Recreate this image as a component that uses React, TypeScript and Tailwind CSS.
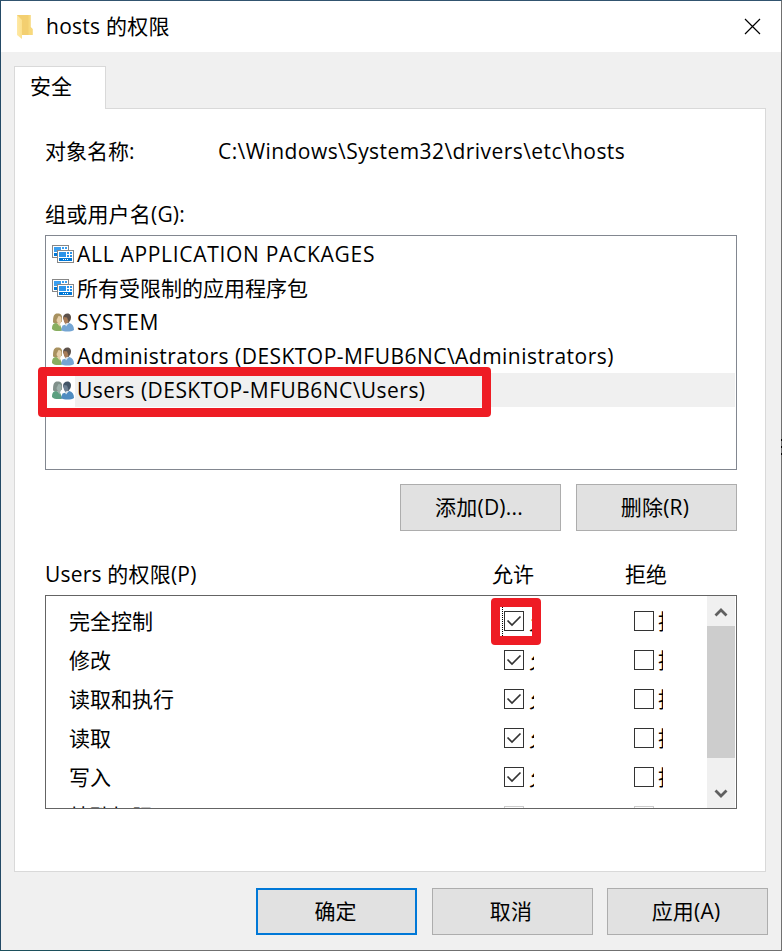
import React from 'react';

const FONT = "font-['Open_Sans','Noto_Sans_CJK_SC',sans-serif]";

function FolderIcon() {
  return (
    <svg className="block" width="18" height="26" viewBox="0 0 18 26">
      <defs>
        <linearGradient id="flap" x1="0" x2="1" y1="0" y2="0">
          <stop offset="0" stopColor="#ffe9a6" />
          <stop offset="1" stopColor="#fbe08c" />
        </linearGradient>
      </defs>
      <path d="M1 1H14.5V13L16.5 15V21H1Z" fill="#f3cf70" />
      <path d="M12.5 1h2v12l2 2v6h-4z" fill="#f8d97c" />
      <path d="M1 1L6 6V25L1 21Z" fill="url(#flap)" />
    </svg>
  );
}

function PackageIcon() {
  return (
    <svg className="block" width="22" height="18" viewBox="0 0 22 18" shapeRendering="crispEdges">
      <rect width="17" height="13" fill="#878787" />
      <rect x="1" y="1" width="15" height="11" fill="#fff" />
      <path d="M2 2h7v5h-7zM10 2h2v2h-2zM13 2h2v2h-2z" fill="#3a9ff0" />
      <path d="M2 8h13v3h-13z" fill="#0078d7" />
      <rect x="5" y="5" width="17" height="13" fill="#878787" />
      <rect x="6" y="6" width="15" height="11" fill="#fff" />
      <path d="M7 7h7v5h-7zM15 7h2v2h-2zM18 7h2v2h-2zM15 10h2v2h-2zM18 10h2v2h-2z" fill="#2b94ea" />
      <path d="M7 13h13v3h-13z" fill="#0078d7" />
      <path d="M11 14h1v1h-1zM13 14h1v1h-1zM15 14h1v1h-1z" fill="#fff" />
    </svg>
  );
}

function PeopleIcon({ dim = false }: { dim?: boolean }) {
  const c = dim
    ? { hair: '#80908a', skin: '#9db0aa', shirt: '#5c9f80', hair2: '#435566', skin2: '#6d8092', shirt2: '#4f8cc0' }
    : { hair: '#a8915f', skin: '#e6cfaa', shirt: '#88ae60', hair2: '#5c5049', skin2: '#a87c58', shirt2: '#74a5d3' };
  return (
    <svg className="block" width="22" height="19" viewBox="0 0 22 19">
      <path d="M1 9.500C1 3 2 .5 5.500 .5c2 0 4 .5 4.500 3v5c-2 2-6 3-9 1Z" fill={c.hair} />
      <path d="M6.500 3c2.500 0 3 1.500 3 4s-1 3.500-2 3.500-3-1.500-3-3.500Z" fill={c.skin} />
      <path d="M0 16c0-4 1-5.500 4-6l4 1.500 2.500 6c-3 1-8.500 1-10.500-1.500Z" fill={c.shirt} />
      <path d="M5 10l2.500 3.500 1-3.500-1-1Z" fill={c.skin} />
      <path d="M11 5c0-3 2-4.500 4.500-4.500s4.500 2.500 3 6.500l-2 3-4-1Z" fill={c.hair2} />
      <path d="M11.500 4l3.500 .5 1.500 4-2.500 2.500c-1.500 0-2.500-3-2.500-7Z" fill={c.skin2} />
      <path d="M9 17l1.500-4.500 3.500-1 3.500-1.500c3 1 4.500 3.500 4.500 7-3 2-10 2-13 0Z" fill={c.shirt2} />
      <path d="M13 11.500l1 2 2.500-3-1-.5Z" fill="#dce5ec" />
    </svg>
  );
}

function Button({ children, primary = false }: { children: React.ReactNode; primary?: boolean }) {
  return (
    <button
      className={`h-[47px] w-[161px] bg-[#e1e1e1] pb-0.5 text-center ${
        primary ? 'border-2 border-[#0078d7] pr-0.5' : 'border border-[#adadad] pr-[3px] tracking-[0.2px]'
      }`}
    >
      {children}
    </button>
  );
}

function Check({ checked = false, faded = false }: { checked?: boolean; faded?: boolean }) {
  return (
    <span className={`block size-5 border bg-white ${faded ? 'border-[#ccc]' : 'border-[#333]'}`}>
      {checked && (
        <svg className="block" width="18" height="18" viewBox="0 0 18 18">
          <path d="M2.500 8.500L7 13L15.500 4.500" fill="none" stroke="#333" strokeWidth="1.7" />
        </svg>
      )}
    </span>
  );
}

const groups = [
  { name: 'ALL APPLICATION PACKAGES', icon: <PackageIcon />, tracking: 'tracking-[0.7px]' },
  { name: '所有受限制的应用程序包', icon: <PackageIcon />, tracking: '' },
  { name: 'SYSTEM', icon: <PeopleIcon />, tracking: 'tracking-[0.9px]' },
  { name: 'Administrators (DESKTOP-MFUB6NC\\Administrators)', icon: <PeopleIcon />, tracking: 'tracking-[0.47px]' },
  { name: 'Users (DESKTOP-MFUB6NC\\Users)', icon: <PeopleIcon dim />, tracking: 'tracking-[0.46px]', selected: true },
];

const permissions = ['完全控制', '修改', '读取和执行', '读取', '写入'];

export default function App() {
  return (
    <div className={`relative flex h-[951px] w-[782px] flex-col border border-t-[#31546f] border-r-[#707070] border-b-[#707070] border-l-[#244a66] bg-[#f0f0f0] text-[21px] leading-7 whitespace-nowrap text-black ${FONT}`}>
      <header className="flex h-[51px] shrink-0 items-center bg-white pr-5 pl-[15px]">
        <FolderIcon />
        <span className="ml-3 grow pb-px tracking-[0.25px]">hosts 的权限</span>
        <svg className="block" width="17" height="17" viewBox="0 0 17 17">
          <path d="M1 1L16 16M16 1L1 16" stroke="#000" strokeWidth="1.2" />
        </svg>
      </header>

      <main className="mt-3.5 ml-[13px] flex w-[752px] flex-col">
        <div className="z-10 -mb-px h-[43px] w-[92px] border border-b-0 border-[#d9d9d9] bg-white pt-[5px] pl-[15px]">安全</div>
        <section className="flex h-[764px] flex-col border border-[#d9d9d9] bg-white pl-[30px]">
          <div className="mt-7 flex h-7">
            <span className="w-[173px]">对象名称:</span>
            <span className="tracking-[0.43px]">C:\Windows\System32\drivers\etc\hosts</span>
          </div>
          <div className="mt-[35px] h-7 tracking-[0.2px]">组或用户名(G):</div>
          <ul className="mt-[7px] h-[235px] w-[692px] border border-[#828790] pt-px pr-px">
            {groups.map((g) => (
              <li key={g.name} className="flex h-[34px] items-center pl-1.5">
                <span className="w-[23px]">{g.icon}</span>
                <span className={`flex h-full grow items-center pl-0.5 ${g.selected ? 'bg-[#f0f0f0]' : ''}`}>
                  <span className={g.tracking}>{g.name}</span>
                </span>
              </li>
            ))}
          </ul>
          <div className="mt-3.5 flex w-[692px] justify-end gap-[15px]">
            <Button>添加(D)...</Button>
            <Button>删除(R)</Button>
          </div>
          <div className="mt-[29px] flex h-7">
            <span className="w-[447px] tracking-[0.2px]">Users 的权限(P)</span>
            <span className="w-[133px]">允许</span>
            <span>拒绝</span>
          </div>
          <div className="mt-[7px] flex h-[214px] w-[692px] overflow-hidden border border-[#646464]">
            <ul className="w-[661px] pt-[5px]">
              {permissions.map((p) => (
                <li key={p} className="flex h-[39px] items-center pl-[23px]">
                  <span className="w-[435px]">{p}</span>
                  <Check checked />
                  <span className="ml-[5px] w-[5px] overflow-hidden">允</span>
                  <span className="ml-[100px]"><Check /></span>
                  <span className="ml-1 w-[5px] overflow-hidden">拒</span>
                </li>
              ))}
              <li className="flex h-[39px] items-center pl-[23px]">
                <span className="w-[435px]">特殊权限</span>
                <Check faded />
                <span className="ml-[110px]"><Check faded /></span>
              </li>
            </ul>
            <div className="mr-px flex w-7 flex-col bg-[#f0f0f0]">
              <div className="flex h-[30px] items-center justify-center pt-0.5">
                <svg className="block" width="14" height="11" viewBox="0 0 14 11"><path d="M1.500 8.500L7 3L12.500 8.500" fill="none" stroke="#606060" strokeWidth="2.800" /></svg>
              </div>
              <div className="h-[132px] bg-[#cdcdcd]" />
              <div className="flex grow items-center justify-center pt-5">
                <svg className="block" width="14" height="11" viewBox="0 0 14 11"><path d="M1.500 2.500L7 8L12.500 2.500" fill="none" stroke="#606060" strokeWidth="2.800" /></svg>
              </div>
            </div>
          </div>
        </section>
      </main>

      <footer className="mt-4 flex justify-end gap-3.5 pr-[13px]">
        <span className="mr-px"><Button primary>确定</Button></span>
        <Button>取消</Button>
        <Button>应用(A)</Button>
      </footer>

      <div className="absolute top-[366px] left-[37px] h-[50px] w-[453px] rounded-[4px] border-[9px] border-[#ee1c24]" />
      <div className="absolute top-[597px] left-[490px] h-[47px] w-[50px] rounded-[4px] border-[9px] border-[#ee1c24]" />
      <div className="absolute top-[606px] left-[501px] h-[29px] border-l border-dotted border-black" />
      <div className="absolute -bottom-px -left-px h-px w-[110px] bg-[#1c505c]" />
      <div className="absolute top-[438px] -right-px flex flex-col gap-[5px]">
        <span className="h-0.5 w-px bg-black" />
        <span className="h-0.5 w-px bg-black" />
        <span className="h-0.5 w-px bg-black" />
      </div>
    </div>
  );
}
